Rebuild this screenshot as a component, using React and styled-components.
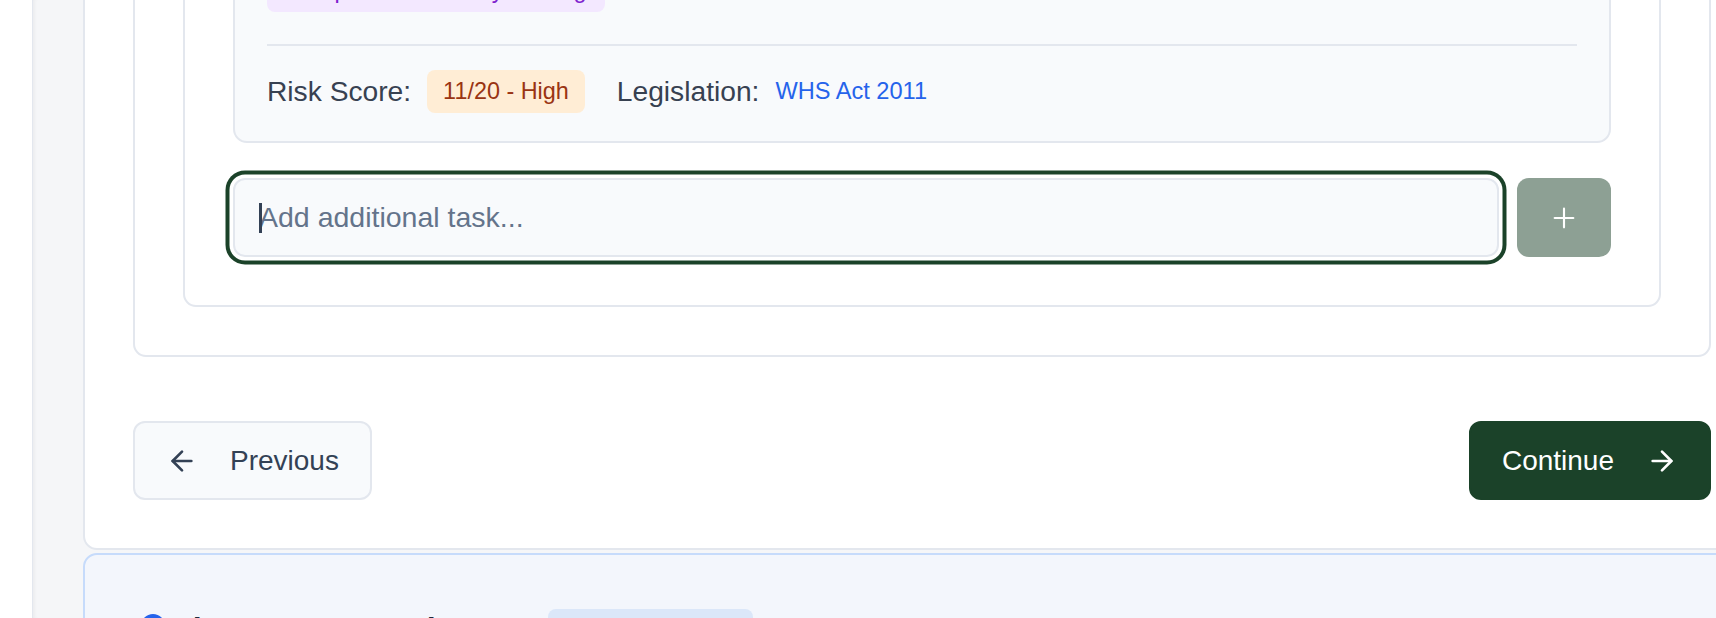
import React from "react";
import styled, { createGlobalStyle } from "styled-components";
import { ArrowLeft, ArrowRight, Plus } from "lucide-react";

const GlobalStyle = createGlobalStyle`
  html, body {
    margin: 0;
    padding: 0;
    background: #ffffff;
    overflow: hidden;
  }
  body {
    font-family: "Liberation Sans", Arial, Helvetica, sans-serif;
    -webkit-font-smoothing: antialiased;
  }
  * {
    box-sizing: border-box;
  }
`;

const Screen = styled.div`
  display: flex;
  width: 1716px;
  height: 618px;
  overflow: hidden;
`;

const Sidebar = styled.aside`
  flex: 0 0 33px;
  background: #ffffff;
  border-right: 1px solid #e3e7ee;
`;

const Main = styled.main`
  flex: 1;
  min-width: 0;
  background: #f5f6f8;
  box-shadow: inset 4px 0 4px -3px rgba(15, 23, 42, 0.06);
  padding-left: 50px;
`;

/* page is scrolled: the top of the step sits above the viewport */
const Steps = styled.div`
  width: 1678px;
  margin-top: -211px;
  display: flex;
  flex-direction: column;
  gap: 3px;
`;

const StepCard = styled.section`
  background: ${(p) => (p.$active ? "#f3f6fc" : "#ffffff")};
  border: 2px solid ${(p) => (p.$active ? "#c6dbfb" : "#e3e7ee")};
  border-radius: 14px;
  padding: 48px;
`;

const Panel = styled.div`
  background: #ffffff;
  border: 2px solid #e3e7ee;
  border-radius: 13px;
  padding: 48px;
`;

const TaskCard = styled.div`
  background: #f8fafc;
  border: 2px solid #e3e7ee;
  border-radius: 14px;
  padding: 28px 32px 28px;
`;

const Pill = styled.span`
  display: inline-flex;
  align-items: center;
  height: 43px;
  padding: 0 ${(p) => p.$pad || 16}px;
  border-radius: 8px;
  font-size: 23.4px;
  white-space: nowrap;
  background: ${(p) =>
    p.$tone === "purple" ? "#f3e8ff" : p.$tone === "blue" ? "#dbe7f9" : "#ffedd5"};
  color: ${(p) =>
    p.$tone === "purple" ? "#7e22ce" : p.$tone === "blue" ? "#1d4ed8" : "#9a3412"};
`;

const MetaRow = styled.div`
  display: flex;
  align-items: center;
  gap: 32px;
  margin-top: 32px;
  padding-top: 24px;
  border-top: 2px solid #e3e7ee;
`;

const MetaItem = styled.div`
  display: flex;
  align-items: center;
  gap: 16px;
`;

const MetaLabel = styled.span`
  font-size: 28.2px;
  line-height: 43px;
  color: #374151;
`;

const LinkText = styled.span`
  font-size: 23.6px;
  color: #2563eb;
`;

const AddRow = styled.div`
  display: flex;
  gap: 18px;
  margin-top: 35px;
`;

const InputWrap = styled.div`
  position: relative;
  flex: 1;
`;

const TaskInput = styled.input`
  width: 100%;
  height: 79px;
  padding: 0 24px;
  border: 2px solid #e3e7ee;
  border-radius: 12px;
  background: #f8fafc;
  font-family: inherit;
  font-size: 28.5px;
  color: #0f172a;
  outline: none;
  box-shadow: 0 0 0 3.5px #ffffff, 0 0 0 7.5px #1b4229;

  &::placeholder {
    color: #64748b;
  }
`;

const Caret = styled.span`
  position: absolute;
  left: 26px;
  top: 25px;
  width: 3px;
  height: 30px;
  background: #334155;
`;

const AddButton = styled.button`
  flex: 0 0 94px;
  height: 79px;
  border: none;
  border-radius: 12px;
  background: #8da094;
  color: #ffffff;
  display: flex;
  align-items: center;
  justify-content: center;
  cursor: not-allowed;
`;

const NavRow = styled.div`
  display: flex;
  justify-content: space-between;
  margin-top: 64px;
`;

const NavButton = styled.button`
  display: flex;
  align-items: center;
  gap: 32px;
  height: 79px;
  padding: 0 31px;
  border-radius: 12px;
  border: 2px solid ${(p) => (p.$primary ? "#1b4229" : "#e3e7ee")};
  background: ${(p) => (p.$primary ? "#1b4229" : "#f8fafc")};
  color: ${(p) => (p.$primary ? "#ffffff" : "#334155")};
  font-family: inherit;
  font-size: 28px;
  cursor: pointer;
`;

const StepHeader = styled.div`
  display: flex;
  align-items: center;
  gap: 8px;
  padding-top: 6px;
`;

const StepDot = styled.span`
  flex: 0 0 24px;
  height: 24px;
  margin: -10px 0 0 8px;
  border-radius: 50%;
  background: #2563eb;
`;

const StepTitle = styled.h3`
  margin: 0 61px 0 0;
  font-size: 32.4px;
  font-weight: 700;
  color: #1e293b;
`;

export default function App() {
  return (
    <>
      <GlobalStyle />
      <Screen>
        <Sidebar />
        <Main>
          <Steps>
            <StepCard>
              <Panel>
                <Panel>
                  <TaskCard>
                    <Pill $tone="purple" $pad={18}>
                      Compliance: Monthly training
                    </Pill>
                    <MetaRow>
                      <MetaItem>
                        <MetaLabel>Risk Score:</MetaLabel>
                        <Pill>11/20 - High</Pill>
                      </MetaItem>
                      <MetaItem>
                        <MetaLabel>Legislation:</MetaLabel>
                        <LinkText>WHS Act 2011</LinkText>
                      </MetaItem>
                    </MetaRow>
                  </TaskCard>
                  <AddRow>
                    <InputWrap>
                      <TaskInput placeholder="Add additional task..." />
                      <Caret />
                    </InputWrap>
                    <AddButton disabled aria-label="Add task">
                      <Plus size={32} strokeWidth={1.6} />
                    </AddButton>
                  </AddRow>
                </Panel>
              </Panel>
              <NavRow>
                <NavButton>
                  <ArrowLeft size={32} strokeWidth={2} />
                  Previous
                </NavButton>
                <NavButton $primary>
                  Continue
                  <ArrowRight size={32} strokeWidth={2} />
                </NavButton>
              </NavRow>
            </StepCard>
            <StepCard $active>
              <StepHeader>
                <StepDot />
                <StepTitle>Live SWMS Preview</StepTitle>
                <Pill $tone="blue" $pad={18}>
                  Pending Review
                </Pill>
              </StepHeader>
            </StepCard>
          </Steps>
        </Main>
      </Screen>
    </>
  );
}
